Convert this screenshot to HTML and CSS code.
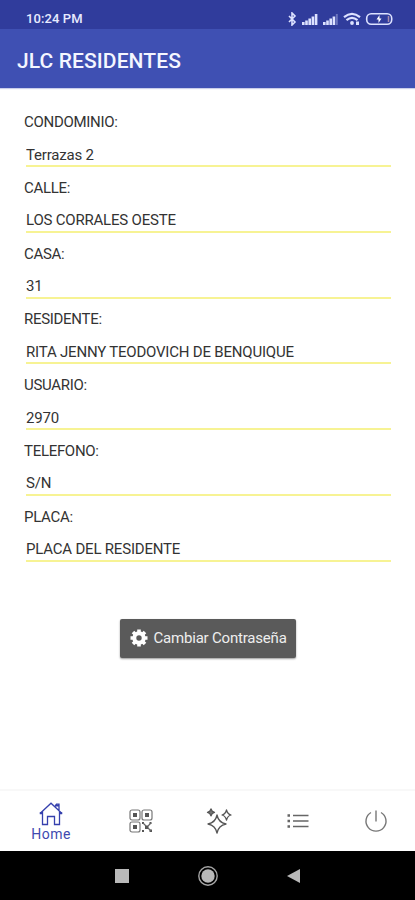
FILE: index.html
```
<!DOCTYPE html>
<html lang="es">
<head>
  <meta charset="UTF-8">
  <meta name="viewport" content="width=device-width, initial-scale=1.0">
  <title>JLC Residentes</title>
  <link rel="stylesheet" href="styles.css">
</head>
<body>
  <div class="status-bar">
    <span class="time">10:24 PM</span>
    <svg class="status-icons" width="106" height="14" viewBox="0 0 106 14">
      <path d="M2 4l6 6L5 13V1L8 4l-6 6" fill="none" stroke="#dde2ff" stroke-width="1.600"/>
      <g fill="#dde2ff">
        <path d="M15 10h2.600v3H15zM18.200 8.500h2.600V13h-2.600zM21.400 6.500H24V13h-2.600zM24.600 4.500h2.600V13h-2.600zM27.800 2h2.600v11h-2.600z"/>
        <path d="M36 10h2.600v3H36zM39.200 8.500h2.600V13h-2.600zM42.400 6.500H45V13h-2.600zM45.600 4.500h2.600V13h-2.600z"/>
        <path d="M48.800 2h2v11h-2z" opacity=".35"/>
        <circle cx="65" cy="11" r="1.900"/>
        <path d="M69 9.500h3V13h-3z"/>
      </g>
      <path d="M57 5.200q8-6.500 16 0M59.500 8.200q5.500-4.500 11 0" fill="none" stroke="#dde2ff" stroke-width="2.200"/>
      <rect x="79.700" y="1.700" width="25" height="10.600" rx="4.500" fill="none" stroke="#dde2ff" stroke-width="1.600"/>
      <path d="M92.500 3l-3 4.500h2V11l3-4.500h-2z" fill="#fff"/>
      <path d="M101.500 4v6" stroke="#a88cae" stroke-width="1.500"/>
    </svg>
  </div>

  <header class="app-bar">
    <h1>JLC RESIDENTES</h1>
  </header>

  <main class="profile">
    <div class="field">
      <label for="condominio">CONDOMINIO:</label>
      <input type="text" id="condominio" value="Terrazas 2">
    </div>
    <div class="field">
      <label for="calle">CALLE:</label>
      <input type="text" id="calle" value="LOS CORRALES OESTE">
    </div>
    <div class="field">
      <label for="casa">CASA:</label>
      <input type="text" id="casa" value="31">
    </div>
    <div class="field">
      <label for="residente">RESIDENTE:</label>
      <input type="text" id="residente" value="RITA JENNY TEODOVICH DE BENQUIQUE">
    </div>
    <div class="field">
      <label for="usuario">USUARIO:</label>
      <input type="text" id="usuario" value="2970">
    </div>
    <div class="field">
      <label for="telefono">TELEFONO:</label>
      <input type="text" id="telefono" value="S/N">
    </div>
    <div class="field">
      <label for="placa">PLACA:</label>
      <input type="text" id="placa" value="PLACA DEL RESIDENTE">
    </div>

    <button class="btn-password" type="button">
      <svg width="18" height="18" viewBox="0 0 18 18">
        <circle cx="9" cy="9" r="4.700" fill="none" stroke="#fff" stroke-width="4"/>
        <path d="M9 .5v3M9 14.500v3M.5 9h3M14.500 9h3M3 3l2 2M13 13l2 2M15 3l-2 2M5 13l-2 2" stroke="#fff" stroke-width="3.600"/>
      </svg>
      <span>Cambiar Contraseña</span>
    </button>
  </main>

  <nav class="tab-bar">
    <a class="tab active" href="#">
      <svg width="24" height="24" viewBox="0 0 24 24" fill="none" stroke="#3540ad" stroke-width="1.300">
        <path d="M1 11.500L12 1.200l11 10.300M3.500 9.500v13h5v-8h7v8h5v-13M16 4.500l1.500-2.300H20V8"/>
        <path d="M.8 11.200H3M21 11.200h2.200M16.500 3.500H20" stroke-width="2"/>
      </svg>
      <span>Home</span>
    </a>
    <a class="tab" href="#">
      <svg width="24" height="24" viewBox="0 0 24 24" fill="none" stroke="#777" stroke-width="1.200">
        <rect x="1" y="1" width="10" height="10" rx="2"/>
        <rect x="13" y="1" width="10" height="10" rx="2"/>
        <rect x="1" y="13" width="10" height="10" rx="2"/>
        <path d="M4 4h4v4H4zM16 4h4v4h-4zM4 16h4v4H4zM16 16.500h3.500V20H16zM13 13h2v2h-2zM20.500 13h2v2h-2zM13 21h2v2h-2zM20.500 20.500h2.500V23h-2.500z" fill="#555" stroke="none"/>
        <path d="M14 14l3 3M22 14l-3 3M19 19l3 3" stroke="#666"/>
      </svg>
    </a>
    <a class="tab" href="#">
      <svg width="26" height="26" viewBox="0 0 26 26" fill="none" stroke="#555" stroke-width="1.300" stroke-linejoin="round">
        <path d="M11 7q1.500 7.500 9 9-7.500 1.500-9 9-1.500-7.500-9-9 7.500-1.500 9-9z"/>
        <path d="M20.500 2q1 4 4.500 5-3.500 1-4.500 5-1-4-4.500-5 3.500-1 4.500-5z"/>
        <path d="M5 .8q.7 2.800 3.500 3.500Q5.700 5 5 7.800 4.300 5 1.500 4.300 4.300 3.600 5 .8z" fill="#777"/>
      </svg>
    </a>
    <a class="tab" href="#">
      <svg width="22" height="18" viewBox="0 0 22 18" stroke="#666" stroke-width="1.400">
        <path d="M6 3.500h15.500M6 9h15.500M6 14.500h15.500"/>
        <path d="M.5 3.500H3M.5 9H3M.5 14.500H3" stroke-width="2.500"/>
      </svg>
    </a>
    <a class="tab" href="#">
      <svg width="24" height="24" viewBox="0 0 24 24" fill="none" stroke="#777" stroke-width="1.400">
        <path d="M7 3.500a10 10 0 1 0 10 0M12 1.500v11"/>
      </svg>
    </a>
  </nav>

  <footer class="system-bar">
    <svg class="recents" width="14" height="14" viewBox="0 0 14 14"><path d="M0 0h14v14H0z" fill="#b9b9b9"/></svg>
    <svg class="home" width="20" height="20" viewBox="0 0 20 20">
      <circle cx="10" cy="10" r="9.200" fill="none" stroke="#a5a5a5" stroke-width="1.400"/>
      <circle cx="10" cy="10" r="6.700" fill="#b9b9b9"/>
    </svg>
    <svg class="back" width="13" height="14" viewBox="0 0 13 14"><path d="M0 7l13-7v14z" fill="#b9b9b9"/></svg>
  </footer>
</body>
</html>
```
FILE: styles.css
```
* {
  margin: 0;
  padding: 0;
  box-sizing: border-box;
  font-family: Roboto, sans-serif;
}

body {
  display: flex;
  flex-direction: column;
  height: 100vh;
  background-color: #fff;
  color: #333;
}

.status-bar {
  display: flex;
  justify-content: space-between;
  align-items: center;
  height: 29px;
  padding: 8px 22px 0 26px;
  background-color: #303c9c;
  color: #e8ebff;
}

.time {
  font-size: 13px;
  font-weight: 500;
  letter-spacing: 0.1px;
}

.app-bar {
  display: flex;
  align-items: center;
  height: 59px;
  padding: 4px 17px 0;
  background-color: #3f50b3;
  color: #f4f6ff;
  box-shadow: 0 1px 1px #c9cdea;
}

.app-bar h1 {
  font-size: 21px;
  font-weight: 500;
  letter-spacing: 0.1px;
}

.profile {
  flex: 1;
  padding: 25px 24px 0;
}

.field {
  height: 65.8px;
}

.field label {
  display: block;
  height: 18px;
  line-height: 18px;
  font-size: 15px;
  letter-spacing: -0.3px;
}

.field input {
  display: block;
  width: calc(100% - 2px);
  height: 36px;
  margin-left: 2px;
  padding-top: 13px;
  border: none;
  border-bottom: 2px solid #f7f394;
  background: none;
  color: #333;
  font-size: 15px;
  letter-spacing: -0.2px;
}

.btn-password {
  display: flex;
  align-items: center;
  gap: 6px;
  width: 176px;
  height: 39px;
  margin: 45px auto 0;
  padding-left: 10px;
  border: none;
  border-radius: 2px;
  background-color: #5a5a5a;
  box-shadow: 0 1px 2px rgba(0,0,0,0.4);
  color: #eee;
  font-size: 15px;
  letter-spacing: -0.2px;
}

.tab-bar {
  display: flex;
  height: 62px;
  border-top: 2px solid #f8f8f8;
}

.tab {
  display: flex;
  flex: 1;
  flex-direction: column;
  align-items: center;
  justify-content: center;
  color: #4049b0;
  font-size: 14px;
  letter-spacing: 0.5px;
  text-decoration: none;
}

.tab.active {
  flex: 0 0 102px;
  padding-top: 2px;
}

.system-bar {
  display: flex;
  align-items: center;
  height: 49px;
  padding-left: 115px;
  background-color: #000;
}

.home {
  margin-left: 69px;
}

.back {
  margin-left: 69px;
}
```
